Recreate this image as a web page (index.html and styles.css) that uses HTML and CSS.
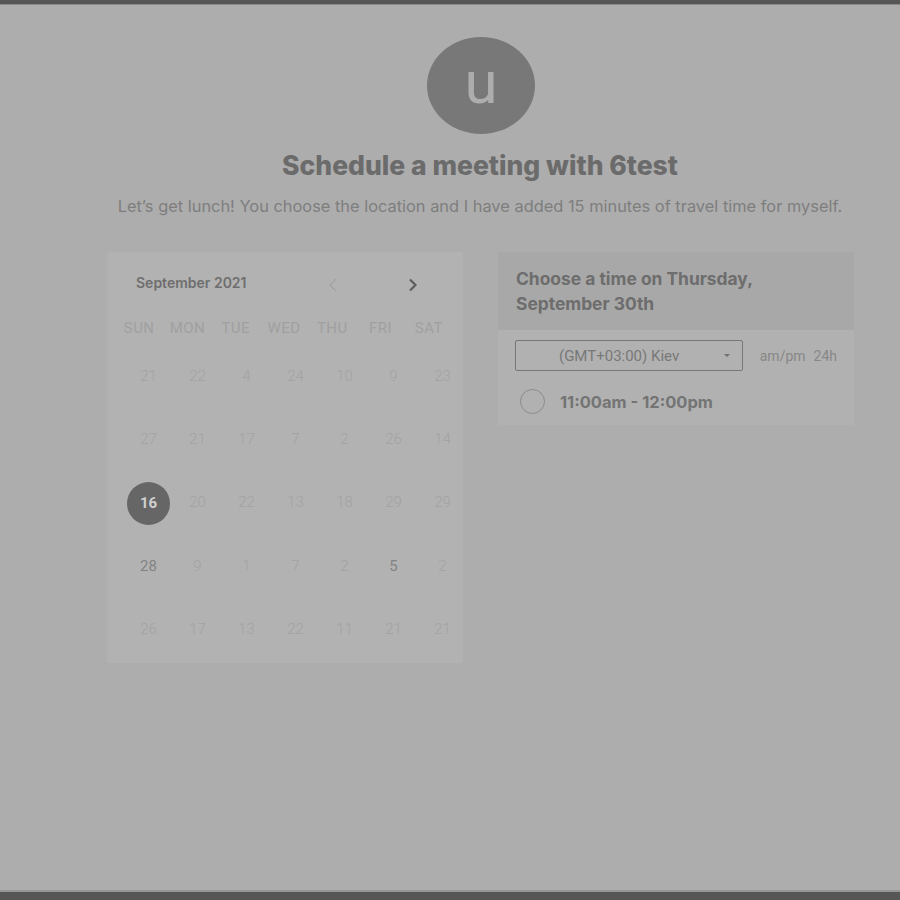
FILE: index.html
```html
<!DOCTYPE html>
<html>
<head>
<meta charset="utf-8">
<link rel="stylesheet" href="styles.css">
</head>
<body>
<div class="page">
  <div class="topbar"></div>
  <main class="main">
    <div class="avatar">u</div>
    <h1 class="title">Schedule a meeting with 6test</h1>
    <p class="subtitle">Let’s get lunch! You choose the location and I have added 15 minutes of travel time for myself.</p>
    <div class="cards">
      <section class="card calendar">
        <div class="cal-head">
          <span class="month">September 2021</span>
          <span class="nav prev"><svg width="10" height="14" viewBox="0 0 10 14"><path d="M8 1 L2 7 L8 13" fill="none" stroke="currentColor" stroke-width="1.4"/></svg></span>
          <span class="nav next"><svg width="10" height="14" viewBox="0 0 10 14"><path d="M2 1.5 L7.5 7 L2 12.5" fill="none" stroke="currentColor" stroke-width="2.2"/></svg></span>
        </div>
        <div class="dow">
          <span>SUN</span><span>MON</span><span>TUE</span><span>WED</span><span>THU</span><span>FRI</span><span>SAT</span>
        </div>
        <div class="days">
          <span>21</span><span>22</span><span>4</span><span>24</span><span>10</span><span>9</span><span>23</span>
          <span>27</span><span>21</span><span>17</span><span>7</span><span>2</span><span>26</span><span>14</span>
          <span class="selected"><b>16</b></span><span>20</span><span>22</span><span>13</span><span>18</span><span>29</span><span>29</span>
          <span class="active">28</span><span>9</span><span>1</span><span>7</span><span>2</span><span class="active">5</span><span>2</span>
          <span>26</span><span>17</span><span>13</span><span>22</span><span>11</span><span>21</span><span>21</span>
        </div>
      </section>
      <section class="card times">
        <div class="times-head">Choose a time on Thursday,<br>September 30th</div>
        <div class="times-body">
          <div class="tz-row">
            <div class="select">
              <span class="select-text">(GMT+03:00) Kiev</span>
              <span class="caret"></span>
            </div>
            <span class="fmt">am/pm</span>
            <span class="fmt">24h</span>
          </div>
          <div class="slot">
            <span class="radio"></span>
            <span class="slot-text">11:00am - 12:00pm</span>
          </div>
        </div>
      </section>
    </div>
  </main>
  <div class="bottombar"></div>
</div>
</body>
</html>
```
FILE: styles.css
```css
* { box-sizing: border-box; }
html, body { margin: 0; padding: 0; }
body {
  background: #adadad;
  font-family: Inter, "Liberation Sans", sans-serif;
}
.page {
  height: 900px;
  display: flex;
  flex-direction: column;
  overflow: hidden;
}
.topbar {
  height: 5px;
  background: #565656;
  border-bottom: 1px solid #8a8a8a;
}
.bottombar {
  height: 10px;
  background: #565656;
  border-top: 2px solid #969696;
}
.main {
  flex: 1;
  display: flex;
  flex-direction: column;
  align-items: center;
  padding-top: 32px;
  padding-left: 60px;
}
.avatar {
  width: 108px;
  height: 97px;
  border-radius: 50%;
  background: #787878;
  color: #adadad;
  font-family: Roboto, sans-serif;
  font-size: 60px;
  line-height: 92px;
  text-align: center;
  margin-left: 2px;
}
.title {
  margin: 16px 0 0;
  font-size: 26.5px;
  font-weight: 800;
  color: #6b6b6b;
  line-height: 30px;
}
.subtitle {
  margin: 16px 0 0;
  font-size: 16.4px;
  font-weight: 400;
  color: #7e7e7e;
  line-height: 20px;
}
.cards {
  margin-top: 36px;
  display: flex;
  gap: 35px;
  align-items: flex-start;
  margin-left: 1px;
}
.card {
  width: 356px;
  background: #b2b2b2;
  border-radius: 3px;
}
.calendar {
  height: 411px;
  padding: 16px 0 0;
}
.cal-head {
  display: flex;
  align-items: center;
  height: 28px;
  padding-left: 29px;
}
.month {
  font-size: 14px;
  font-weight: 600;
  color: #6e6e6e;
  width: 192px;
}
.nav { display: flex; align-items: center; margin-top: 6px; }
.prev { color: #a2a2a2; width: 80px; }
.next { color: #5e5e5e; }
.dow {
  display: grid;
  grid-template-columns: repeat(7, 48.3px);
  padding-left: 8px;
  margin-top: 22px;
  font-family: Roboto, sans-serif;
  font-size: 15px;
  letter-spacing: 0.5px;
  color: #a0a0a0;
  line-height: 20px;
}
.dow span { text-align: center; }
.days {
  display: grid;
  grid-template-columns: repeat(7, 49px);
  grid-auto-rows: 63.4px;
  padding-left: 17px;
  margin-top: 6px;
  font-family: Roboto, sans-serif;
  font-size: 15px;
  font-weight: 300;
  color: #a2a2a2;
}
.days span {
  display: flex;
  align-items: center;
  justify-content: center;
}
.days .active { color: #838383; font-weight: 400; }
.days .selected b {
  width: 43px;
  height: 43px;
  margin-top: 2px;
  border-radius: 50%;
  background: #666;
  color: #d0d0d0;
  font-weight: 700;
  display: flex;
  align-items: center;
  justify-content: center;
  font-size: 15px;
}
.times {
  overflow: hidden;
}
.times-head {
  background: #a8a8a8;
  padding: 14px 18px 0;
  height: 78px;
  font-size: 17.4px;
  font-weight: 700;
  line-height: 25px;
  color: #6d6d6d;
}
.times-body {
  background: #b1b1b1;
  margin-top: 3px;
  padding: 7px 17px 11px;
}
.tz-row {
  display: flex;
  align-items: center;
}
.select {
  width: 228px;
  height: 31px;
  border: 1px solid #777;
  border-radius: 2px;
  display: flex;
  align-items: center;
  padding: 0 12px 0 43px;
  font-family: Roboto, sans-serif;
}
.select-text {
  flex: 1;
  font-size: 15px;
  color: #787878;
}
.caret {
  width: 0;
  height: 0;
  border-left: 3px solid transparent;
  border-right: 3px solid transparent;
  border-top: 3px solid #6e6e6e;
}
.fmt {
  font-family: Roboto, sans-serif;
  font-size: 14px;
  color: #888;
  margin-left: 17px;
}
.fmt + .fmt { margin-left: 8px; }
.slot {
  display: flex;
  align-items: center;
  margin-top: 18px;
  padding-left: 5px;
}
.radio {
  width: 25px;
  height: 25px;
  border-radius: 50%;
  border: 1.5px solid #8c8c8c;
}
.slot-text {
  margin-left: 15px;
  font-size: 16.5px;
  font-weight: 700;
  color: #747474;
}
```
